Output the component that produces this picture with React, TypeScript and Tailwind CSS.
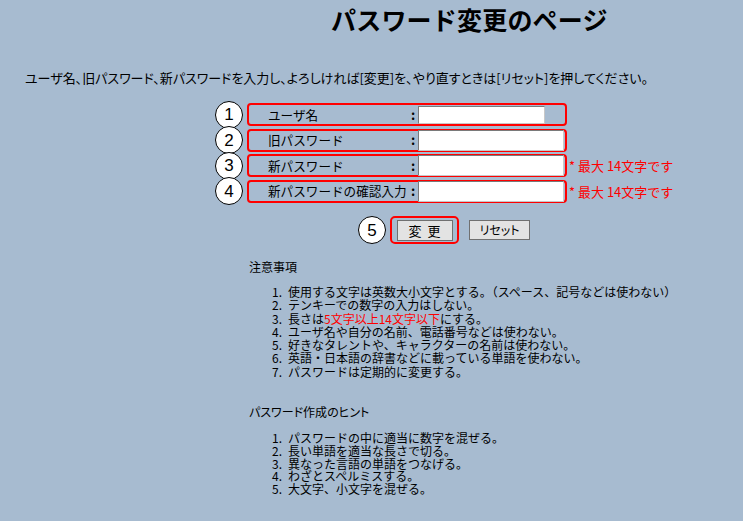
import React from 'react';

const font = "font-['Noto_Sans_CJK_JP','Noto_Sans',sans-serif]";

function Circle({ n }: { n: number }) {
  return (
    <span className="flex h-[28px] w-[28px] shrink-0 items-center justify-center rounded-full border border-black bg-white text-[17px] leading-none text-black font-['Liberation_Sans',sans-serif]">
      {n}
    </span>
  );
}

type Field = { n: number; label: string; note?: boolean; short?: boolean };

const fields: Field[] = [
  { n: 1, label: 'ユーザ名', short: true },
  { n: 2, label: '旧パスワード' },
  { n: 3, label: '新パスワード', note: true },
  { n: 4, label: '新パスワードの確認入力', note: true },
];

const notes: React.ReactNode[] = [
  '使用する文字は英数大小文字とする。（スペース、記号などは使わない）',
  'テンキーでの数字の入力はしない。',
  <>
    長さは<span className="text-[#ff0000]">5文字以上14文字以下</span>にする。
  </>,
  'ユーザ名や自分の名前、電話番号などは使わない。',
  '好きなタレントや、キャラクターの名前は使わない。',
  '英語・日本語の辞書などに載っている単語を使わない。',
  'パスワードは定期的に変更する。',
];

const hints = [
  'パスワードの中に適当に数字を混ぜる。',
  '長い単語を適当な長さで切る。',
  '異なった言語の単語をつなげる。',
  'わざとスペルミスする。',
  '大文字、小文字を混ぜる。',
];

function List({ items, leading }: { items: React.ReactNode[]; leading: string }) {
  return (
    <div className={`text-[12px] text-black ${leading}`}>
      {items.map((t, i) => (
        <div key={i} className="flex">
          <span className="w-[33px] shrink-0 text-right">{i + 1}.</span>
          <span className="ml-[6px] whitespace-nowrap">{t}</span>
        </div>
      ))}
    </div>
  );
}

export default function App() {
  return (
    <div className={`min-h-[521px] w-[743px] overflow-hidden bg-[#a7bbd0] text-black ${font}`}>
      <h1 className="pt-[2px] pl-[331px] text-[25px] font-bold leading-[34px] tracking-[0.2px]">
        パスワード変更のページ
      </h1>

      <p className="mt-[34px] pl-[25px] text-[13px] leading-[16px] whitespace-nowrap [font-feature-settings:'palt']">
        ユーザ名、旧パスワード、新パスワードを入力し、よろしければ[変更]を、やり直すときは[リセット]を押してください。
      </p>

      {/* 入力フォーム */}
      <div className="mt-[16px] ml-[215px] flex flex-col">
        {fields.map((f) => (
          <div key={f.n} className="flex h-[25.5px] items-center">
            <Circle n={f.n} />
            <div className="ml-[4px] flex h-[23px] w-[320px] items-center rounded-[4px] border-2 border-[#ff0000]">
              <span className="w-[162px] pl-[19px] text-[12.6px] leading-[16px] whitespace-nowrap">
                {f.label}
              </span>
              <span className="w-[6px] text-[13px] leading-[16px] font-bold">:</span>
              <input
                type="text"
                className={`ml-[1px] border border-[#7a7a7a] border-r-[#c8c8c8] border-b-[#c8c8c8] bg-white outline-none ${
                  f.short ? 'h-[18px] w-[127px]' : 'h-[21px] w-[146px]'
                }`}
              />
            </div>
            {f.note && (
              <span className="ml-[2px] text-[13px] whitespace-nowrap text-[#ff0000]">* 最大 14文字です</span>
            )}
          </div>
        ))}
      </div>

      <div className="mt-[12px] ml-[358px] flex items-center">
        <Circle n={5} />
        <div className="ml-[4px] flex h-[28px] w-[69px] items-center justify-center rounded-[5px] border-2 border-[#ff0000]">
          <button className="h-[21px] w-[56px] border border-[#707070] bg-[#e3e3e3] text-[13px] leading-none tracking-[6px] pl-[6px]">
            変更
          </button>
        </div>
        <button className="ml-[10px] h-[20px] w-[61px] border border-[#707070] bg-[#e3e3e3] text-[12px] leading-none [font-feature-settings:'palt']">
          リセット
        </button>
      </div>

      {/* 注意事項 */}
      <div className="mt-[16px] ml-[249px]">
        <div className="text-[12px] leading-[14px]">注意事項</div>
        <div className="mt-[11px]">
          <List items={notes} leading="leading-[13.3px]" />
        </div>

        <div className="mt-[27px] text-[12px] leading-[14px] [font-feature-settings:'palt']">パスワード作成のヒント</div>
        <div className="mt-[13px]">
          <List items={hints} leading="leading-[12.8px]" />
        </div>
      </div>
    </div>
  );
}
